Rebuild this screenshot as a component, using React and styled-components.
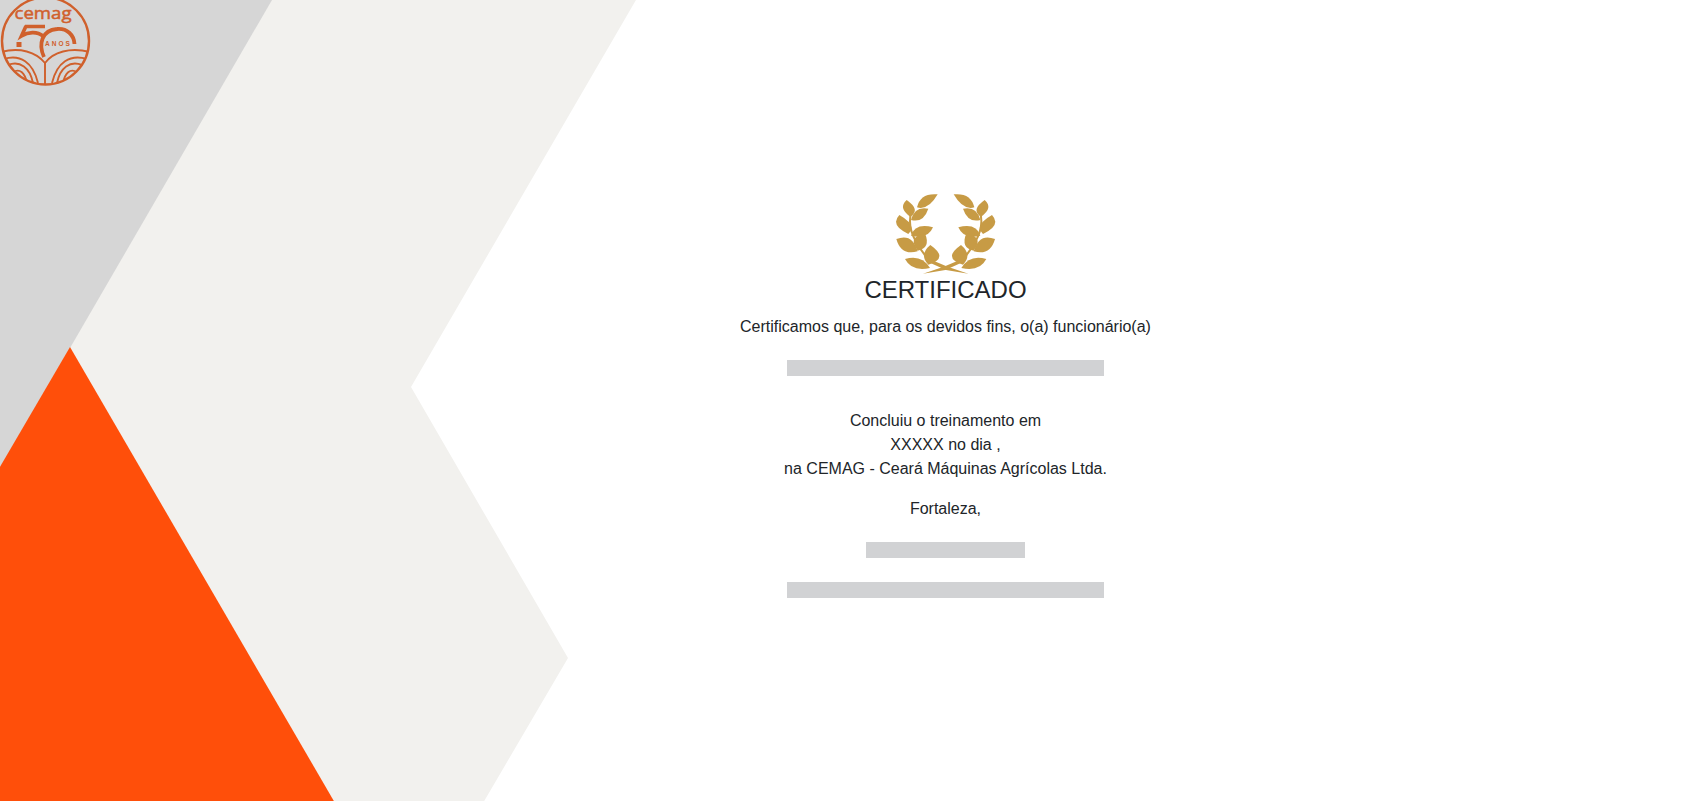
import React from "react";
import styled, { createGlobalStyle } from "styled-components";

const Global = createGlobalStyle`
  html, body { margin: 0; padding: 0; background: #fff; }
  body { font-family: "Liberation Sans", Arial, sans-serif; color: #212529; }
`;

const Page = styled.div`
  position: relative;
  height: 100vh;
  min-height: 801px;
  overflow: hidden;
  padding-left: 200px;
  box-sizing: border-box;
`;

const Backdrop = styled.svg`
  position: absolute;
  inset: 0;
  width: 100%;
  height: 100%;
`;

const Logo = styled.svg`
  position: absolute;
  left: 0;
  top: 0;
  width: 92px;
  height: 88px;
`;

const Certificate = styled.main`
  position: relative;
  display: flex;
  flex-direction: column;
  align-items: center;
  padding-top: 194px;
  text-align: center;
`;

const Wreath = styled.svg`
  display: block;
  width: 100px;
  height: 81px;
`;

const Title = styled.h1`
  margin: 0 0 11px;
  font-size: 24px;
  font-weight: 400;
  line-height: 29px;
`;

const Line = styled.p`
  margin: ${(p) => p.$mt || 0}px 0 0;
  font-size: 16px;
  line-height: 24px;
`;

const Redacted = styled.div`
  width: ${(p) => p.$w}px;
  height: 16px;
  margin-top: ${(p) => p.$mt}px;
  background: #d1d2d4;
`;

const Leaves = () => (
  <g fill="#c79b45">
    <path d="M78 52Q88 8 140 13Q112 62 78 52Z" />
    <path d="M58 80Q20 54 47 30Q90 60 58 80Z" />
    <path d="M60 90Q70 48 112 56Q97 100 60 90Z" />
    <path d="M52 132Q-4 106 25 75Q80 106 52 132Z" />
    <path d="M60 137Q72 98 126 112Q110 150 60 137Z" />
    <path d="M80 184Q30 198 16 147Q64 128 80 184Z" />
    <path d="M80 182Q48 142 102 130Q120 175 80 182Z" />
    <path d="M112 224Q83 194 118 165Q175 205 112 224Z" />
    <path d="M117 234Q62 246 42 207Q92 192 117 234Z" />
    <path d="M62 62C50 100 55 140 115 212" fill="none" stroke="#c79b45" strokeWidth="6" />
    <path d="M113 206L170 230L232 251L165 240L110 215Z" />
  </g>
);

export default function App() {
  return (
    <Page>
      <Global />
      <Backdrop viewBox="0 0 1691 801" preserveAspectRatio="none" aria-hidden="true">
        <g style={{ filter: "blur(0.6px)" }}>
          <polygon points="-20,-20 647.6,-20 411,387 568,658 476,815 -20,815" fill="#f2f1ee" />
          <polygon points="-20,-20 283.6,-20 70,348 -20,503" fill="#d6d6d6" />
          <polygon points="70,347 -20,501 -20,815 342,815" fill="#ff4f0a" />
        </g>
      </Backdrop>

      <Logo viewBox="0 0 92 88" aria-label="cemag 50 anos">
        <defs>
          <clipPath id="seal">
            <circle cx="45.5" cy="41" r="44" />
          </clipPath>
        </defs>
        <g fill="none" stroke="#d0602c">
          <circle cx="45.5" cy="41" r="43.5" strokeWidth="2.4" />
          <g clipPath="url(#seal)" strokeWidth="1.9">
            <path d="M1 52C20 47 36 52 45 63C53 52 70 47 90 52" />
            <path d="M4 59C20 54 33 62 38 83M52 83C57 62 70 54 87 59" />
            <path d="M8 65C20 60 30 68 33 83M57 83C60 68 70 60 82 65" />
            <path d="M13 72C20 68 25 73 27 83M63 83C65 73 70 68 77 72" />
            <path d="M45 63V84" />
          </g>
          <path d="M25 26.5H45M26 26L21.5 36C28 32 37 31 43 36" strokeWidth="3.6" />
          <path d="M44 57C38 44 42 30 57 29C67 28 74 35 74.5 44" strokeWidth="3.8" />
        </g>
        <rect x="16.5" y="42" width="5" height="5" fill="#d0602c" />
        <text x="14.5" y="19" fontFamily="'Open Sans', sans-serif" fontSize="17" fontWeight="400" textLength="57" lengthAdjust="spacingAndGlyphs" fill="#d0602c" stroke="#d0602c" strokeWidth="0.5">cemag</text>
        <text x="45" y="45.5" fontFamily="'Liberation Sans', sans-serif" fontSize="6.5" fontWeight="700" letterSpacing="2" fill="#d0602c">ANOS</text>
      </Logo>

      <Certificate>
        <Wreath viewBox="15 12 300 243" aria-hidden="true">
          <Leaves />
          <g transform="translate(328 0) scale(-1 1)">
            <Leaves />
          </g>
        </Wreath>
        <Title>CERTIFICADO</Title>
        <Line>Certificamos que, para os devidos fins, o(a) funcionário(a)</Line>
        <Redacted $w={317} $mt={21} />
        <Line $mt={33}>Concluiu o treinamento em</Line>
        <Line>XXXXX no dia ,</Line>
        <Line>na CEMAG - Ceará Máquinas Agrícolas Ltda.</Line>
        <Line $mt={16}>Fortaleza,</Line>
        <Redacted $w={159} $mt={21} />
        <Redacted $w={317} $mt={24} />
      </Certificate>
    </Page>
  );
}
